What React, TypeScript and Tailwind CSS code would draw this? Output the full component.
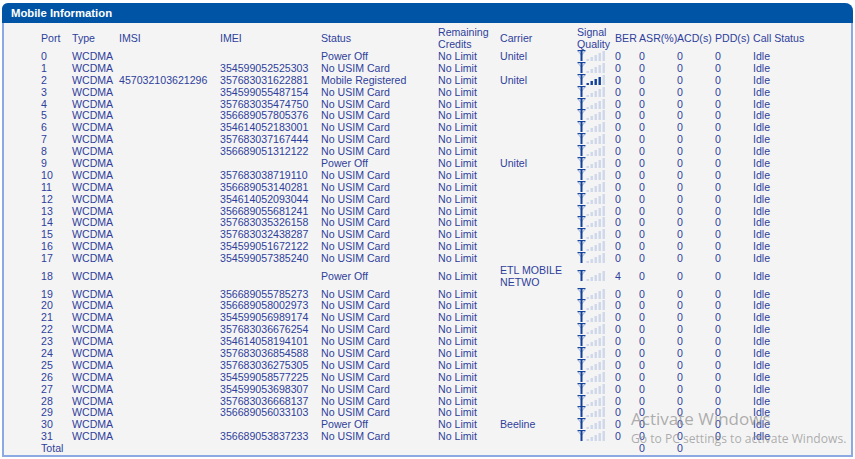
import React from 'react';

type Row = { port: number; imsi?: string; imei?: string; status: string; carrier?: string; bars?: number; ber?: number; tall?: boolean };

const NO_CARD = 'No USIM Card';
const OFF = 'Power Off';

const rows: Row[] = [
  { port: 0, status: OFF, carrier: 'Unitel' },
  { port: 1, imei: '354599052525303', status: NO_CARD },
  { port: 2, imsi: '457032103621296', imei: '357683031622881', status: 'Mobile Registered', carrier: 'Unitel', bars: 4 },
  { port: 3, imei: '354599055487154', status: NO_CARD },
  { port: 4, imei: '357683035474750', status: NO_CARD },
  { port: 5, imei: '356689057805376', status: NO_CARD },
  { port: 6, imei: '354614052183001', status: NO_CARD },
  { port: 7, imei: '357683037167444', status: NO_CARD },
  { port: 8, imei: '356689051312122', status: NO_CARD },
  { port: 9, status: OFF, carrier: 'Unitel' },
  { port: 10, imei: '357683038719110', status: NO_CARD },
  { port: 11, imei: '356689053140281', status: NO_CARD },
  { port: 12, imei: '354614052093044', status: NO_CARD },
  { port: 13, imei: '356689055681241', status: NO_CARD },
  { port: 14, imei: '357683035326158', status: NO_CARD },
  { port: 15, imei: '357683032438287', status: NO_CARD },
  { port: 16, imei: '354599051672122', status: NO_CARD },
  { port: 17, imei: '354599057385240', status: NO_CARD },
  { port: 18, status: OFF, carrier: 'ETL MOBILE NETWO', ber: 4, tall: true },
  { port: 19, imei: '356689055785273', status: NO_CARD },
  { port: 20, imei: '356689058002973', status: NO_CARD },
  { port: 21, imei: '354599056989174', status: NO_CARD },
  { port: 22, imei: '357683036676254', status: NO_CARD },
  { port: 23, imei: '354614058194101', status: NO_CARD },
  { port: 24, imei: '357683036854588', status: NO_CARD },
  { port: 25, imei: '357683036275305', status: NO_CARD },
  { port: 26, imei: '354599058577225', status: NO_CARD },
  { port: 27, imei: '354599053698307', status: NO_CARD },
  { port: 28, imei: '357683036668137', status: NO_CARD },
  { port: 29, imei: '356689056033103', status: NO_CARD },
  { port: 30, status: OFF, carrier: 'Beeline' },
  { port: 31, imei: '356689053837233', status: NO_CARD },
];

const gridCols = 'grid grid-cols-[31px_47px_101px_101px_117px_62px_77px_38px_24px_38px_38px_38px_1fr] items-center';

const SignalIcon = ({ bars = 0 }: { bars?: number }) => (
  <svg width="28" height="12" viewBox="0 1 28 12" className="block overflow-visible">
    <path d="M1 2.2L4.5 6.2L8 2.2" fill="none" stroke="#7f9ad0" strokeWidth="0.8" />
    <rect x="0.5" y="1" width="8" height="1.2" fill="#1a4aa0" />
    <rect x="3.5" y="1" width="2" height="11" fill="#123f98" />
    {[2, 4, 6, 8, 10].map((h, i) => (
      <rect
        key={i}
        x={9.5 + i * 4}
        y={12 - h}
        width="2.4"
        height={h}
        fill={i < bars ? '#123f98' : '#ced8ea'}
      />
    ))}
  </svg>
);

export default function App() {
  return (
    <div className="relative w-[855px] h-[459px] overflow-hidden bg-white pt-[3px] px-[2px] font-['Liberation_Sans',Arial,sans-serif] text-[10.6px] leading-[12px] text-[#2f3f9c]">
      <div className="h-[454px] border-x-2 border-b-2 border-[#8ba9e3] rounded-tl-[6px] rounded-tr-[8px] bg-[#f4f4f4]">
        {/* Title bar */}
        <div className="-mx-[2px] h-[20px] flex items-center pl-[9px] bg-[#0054a6] rounded-tl-[6px] rounded-tr-[8px] text-white font-bold text-[11.3px]">
          Mobile Information
        </div>

        <div className="pl-[37px]">
          {/* Column headings */}
          <div className={`${gridCols} h-[27px] pt-[3px]`}>
            <div>Port</div>
            <div>Type</div>
            <div>IMSI</div>
            <div>IMEI</div>
            <div>Status</div>
            <div>Remaining Credits</div>
            <div>Carrier</div>
            <div>Signal Quality</div>
            <div>BER</div>
            <div>ASR(%)</div>
            <div>ACD(s)</div>
            <div>PDD(s)</div>
            <div>Call Status</div>
          </div>

          {rows.map(row => (
            <div key={row.port} className={`${gridCols} ${row.tall ? 'h-[23.5px]' : 'h-[11.9px]'}`}>
              <div>{row.port}</div>
              <div>WCDMA</div>
              <div>{row.imsi}</div>
              <div>{row.imei}</div>
              <div>{row.status}</div>
              <div>No Limit</div>
              <div>{row.carrier}</div>
              <div><SignalIcon bars={row.bars} /></div>
              <div>{row.ber ?? 0}</div>
              <div>0</div>
              <div>0</div>
              <div>0</div>
              <div>Idle</div>
            </div>
          ))}

          {/* Total */}
          <div className={`${gridCols} h-[11.9px]`}>
            <div className="col-span-9">Total</div>
            <div>0</div>
            <div>0</div>
          </div>
        </div>
      </div>

      {/* Windows activation watermark */}
      <div className="absolute left-[631px] top-[408px] text-[#8c8c8c]/70 font-['Open_Sans',sans-serif] whitespace-nowrap">
        <div className="text-[17px] leading-[22px]">Activate Windows</div>
        <div className="text-[12.1px] leading-[16px] mt-[1px]">Go to PC settings to activate Windows.</div>
      </div>
    </div>
  );
}
